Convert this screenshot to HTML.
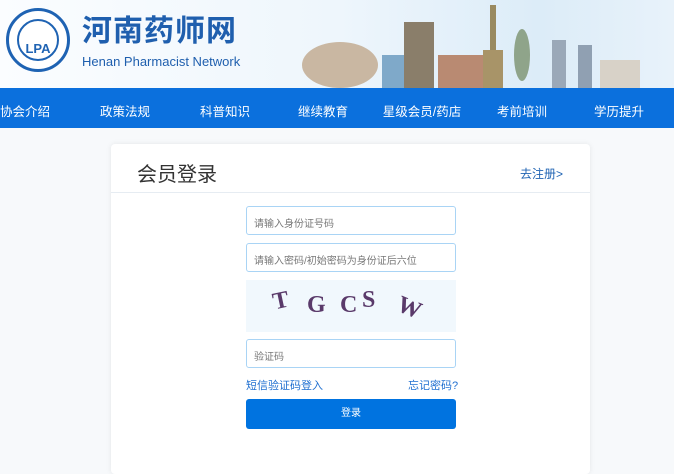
<!DOCTYPE html>
<html><head><meta charset="utf-8"><style>
*{margin:0;padding:0;box-sizing:border-box}
body{width:674px;height:461px;overflow:hidden;background:#f7f9fb;font-family:"Liberation Sans","Noto Sans CJK SC",sans-serif;position:relative}
.hd{position:absolute;left:0;top:0;width:674px;height:88px;background:linear-gradient(90deg,#fbfdff 0%,#eef6fc 50%,#dcecf8 80%,#e8f2fa 100%)}
.logo{position:absolute;left:6px;top:8px;width:64px;height:64px;border-radius:50%;border:3px solid #1f63b3;background:#fff}
.logo i{position:absolute;left:8px;top:8px;width:42px;height:42px;border-radius:50%;border:2px solid #1f63b3;font-style:normal;color:#1f63b3;font-weight:bold;font-size:13px;text-align:center;line-height:56px}
.t1{position:absolute;left:82px;top:6px;font-size:30px;color:#1f5fae;font-weight:bold;letter-spacing:1px}
.t2{position:absolute;left:82px;top:54px;font-size:13px;color:#1f5fae}
.nav{position:absolute;left:0;top:88px;width:674px;height:40px;background:#0b70dd}
.nav span{position:absolute;top:13px;font-size:12.5px;color:#fff;transform:translateX(-50%);white-space:nowrap}
.card{position:absolute;left:111px;top:144px;width:479px;height:330px;background:#fff;border-radius:4px;box-shadow:0 0 6px rgba(0,0,0,.08)}
.ttl{position:absolute;left:26px;top:14px;font-size:20px;color:#333}
.reg{position:absolute;left:409px;top:21px;font-size:12px;color:#1f63b3}
.line{position:absolute;left:0;top:48px;width:100%;height:1px;background:#e6ecf2}
.in{position:absolute;left:135px;width:210px;height:29px;border:1px solid #a9d4f5;border-radius:3px;font-size:10px;color:#777;padding:8px 7px}
.cap{position:absolute;left:135px;top:136px;width:210px;height:52px;background:#f1f8fd}
.cap b{position:absolute;font-family:"Liberation Serif",serif;font-size:24px;font-weight:900;color:#5a3a6a}
.lk{position:absolute;top:233px;font-size:11px;color:#1f6fd0}
.btn{position:absolute;left:135px;top:255px;width:210px;height:30px;background:#0073e0;border-radius:3px;color:#fff;font-size:10px;text-align:center;line-height:30px}
</style></head><body>
<div class="hd">
<svg style="position:absolute;left:300px;top:0" width="374" height="88">
<ellipse cx="40" cy="65" rx="38" ry="23" fill="#c9b7a2"/>
<rect x="82" y="55" width="22" height="33" fill="#7fa9c9"/>
<rect x="104" y="22" width="30" height="66" fill="#8a7e6a"/>
<rect x="138" y="55" width="46" height="33" fill="#b98a72"/>
<rect x="190" y="5" width="6" height="83" fill="#9a8a60"/>
<rect x="183" y="50" width="20" height="38" fill="#a89468"/>
<ellipse cx="222" cy="55" rx="8" ry="26" fill="#8fa48a"/>
<rect x="252" y="40" width="14" height="48" fill="#9aa8b8"/>
<rect x="278" y="45" width="14" height="43" fill="#90a0b2"/>
<rect x="300" y="60" width="40" height="28" fill="#d8d2c8"/>
</svg>
<div class="logo"><i>LPA</i></div>
<div class="t1">河南药师网</div>
<div class="t2">Henan Pharmacist Network</div>
</div>
<div class="nav">
<span style="left:25px">协会介绍</span><span style="left:125px">政策法规</span><span style="left:225px">科普知识</span><span style="left:323px">继续教育</span><span style="left:422px">星级会员/药店</span><span style="left:522px">考前培训</span><span style="left:619px">学历提升</span>
</div>
<div class="card">
<div class="ttl">会员登录</div><div class="reg">去注册&gt;</div><div class="line"></div>
<div class="in" style="top:62px">请输入身份证号码</div>
<div class="in" style="top:99px">请输入密码/初始密码为身份证后六位</div>
<div class="cap"><b style="left:27px;top:8px;transform:rotate(-12deg)">T</b><b style="left:61px;top:12px">G</b><b style="left:94px;top:12px">C</b><b style="left:116px;top:7px">S</b><b style="left:151px;top:15px;transform:rotate(22deg)">W</b></div>
<div class="in" style="top:195px">验证码</div>
<div class="lk" style="left:135px">短信验证码登入</div>
<div class="lk" style="left:297px">忘记密码?</div>
<div class="btn">登录</div>
</div>
</body></html>
